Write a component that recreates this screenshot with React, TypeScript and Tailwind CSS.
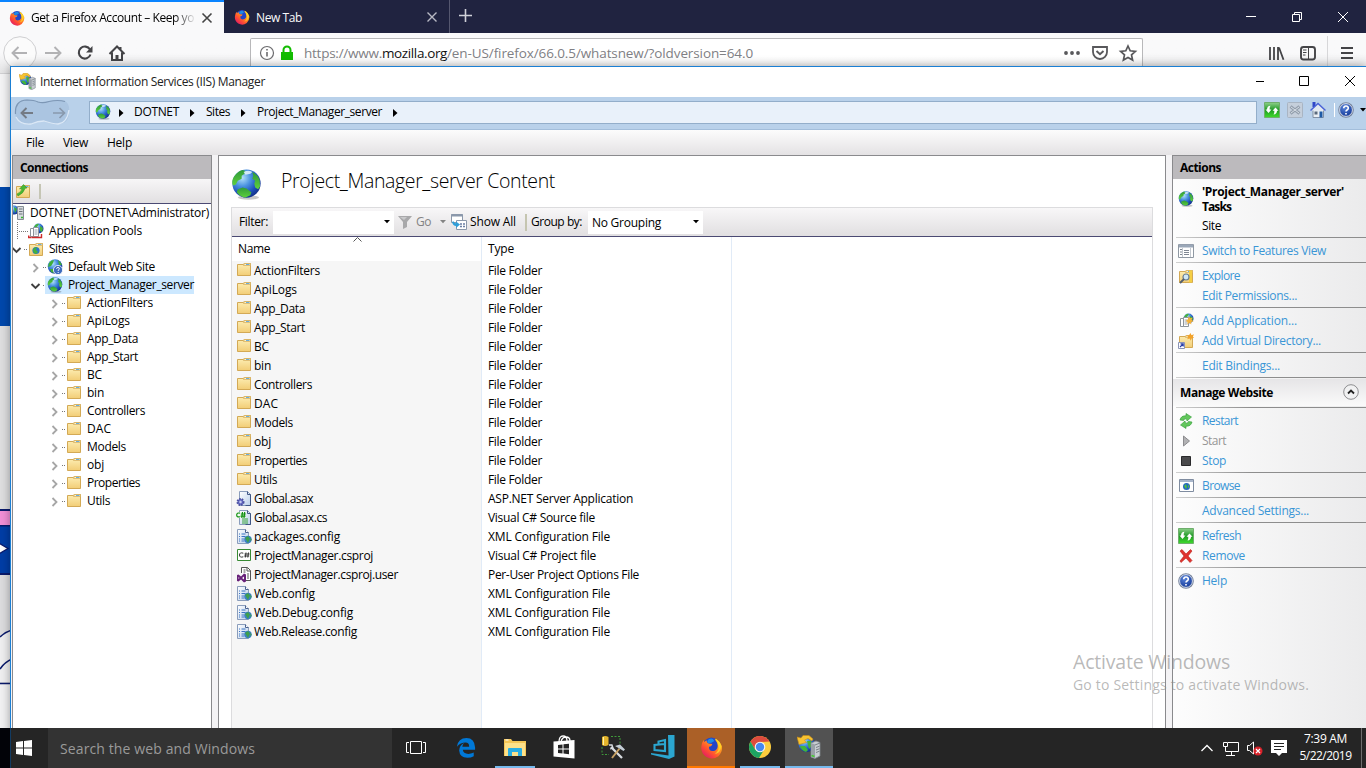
import { useLayoutEffect, useRef, useState } from "react";
import type { ReactNode } from "react";

/* Label whose tracking is adjusted so that it fills a given width. */
function T({ w, children, className = "" }: { w: number; children: string; className?: string }) {
  const ref = useRef<HTMLSpanElement>(null);
  const [spacing, setSpacing] = useState(0);
  useLayoutEffect(() => {
    const el = ref.current;
    if (!el) return;
    el.style.letterSpacing = "0px";
    const natural = el.getBoundingClientRect().width;
    const next = (w - natural) / children.length;
    el.style.letterSpacing = next + "px";
    setSpacing(next);
  }, [w, children]);
  return (
    <span ref={ref} className={"inline-block shrink-0 whitespace-pre " + className} style={{ letterSpacing: spacing + "px" }}>
      {children}
    </span>
  );
}

function Defs() {
  return (
    <svg className="absolute h-0 w-0" aria-hidden="true">
      <defs>
        <radialGradient id="ocean" cx="0.35" cy="0.3" r="0.75">
          <stop offset="0" stopColor="#b4e2fa" />
          <stop offset="0.4" stopColor="#4a92e0" />
          <stop offset="0.75" stopColor="#1d4fb8" />
          <stop offset="1" stopColor="#123088" />
        </radialGradient>
        <linearGradient id="land" x1="0" y1="0" x2="0" y2="1">
          <stop offset="0" stopColor="#2f9a3a" />
          <stop offset="1" stopColor="#5ed03c" />
        </linearGradient>
        <linearGradient id="folderG" x1="0" y1="0" x2="0" y2="1">
          <stop offset="0" stopColor="#fdeeb4" />
          <stop offset="1" stopColor="#f2cd76" />
        </linearGradient>
        <linearGradient id="fox" x1="1" y1="0" x2="0.2" y2="1">
          <stop offset="0" stopColor="#ffe226" />
          <stop offset="0.4" stopColor="#ff9a1f" />
          <stop offset="0.7" stopColor="#ff5130" />
          <stop offset="1" stopColor="#e0166a" />
        </linearGradient>
        <linearGradient id="greenG" x1="0" y1="0" x2="0" y2="1">
          <stop offset="0" stopColor="#8ed08a" />
          <stop offset="0.5" stopColor="#1f9a26" />
          <stop offset="1" stopColor="#3fdc2c" />
        </linearGradient>
        <linearGradient id="pageG" x1="0" y1="0" x2="1" y2="1">
          <stop offset="0" stopColor="#ffffff" />
          <stop offset="1" stopColor="#b9cfea" />
        </linearGradient>
        <radialGradient id="helpG" cx="0.4" cy="0.3" r="0.8">
          <stop offset="0" stopColor="#5b86dc" />
          <stop offset="1" stopColor="#0b2f8e" />
        </radialGradient>
      </defs>
    </svg>
  );
}

function Globe({ s = 16 }: { s?: number }) {
  return (
    <svg width={s} height={s} viewBox="0 0 32 32" className="shrink-0">
      <ellipse cx="18" cy="29.500" rx="11" ry="2.200" fill="#000" opacity="0.22" />
      <circle cx="16" cy="15" r="14.600" fill="url(#ocean)" />
      <path d="M3 8Q7 2 12 1l3 1-1 3-3 2 0 3-4 2-2 4-3 1Q0 13 3 8Z" fill="url(#land)" />
      <path d="M22 3q5 2 7.500 8l.500 7-2 3-3-2-1-4 1-3-3-2 1-3Z" fill="url(#land)" />
      <path d="M7 21l5-2 4 1 5 4-1 3-5 2.500Q9 28.500 6 24Z" fill="url(#land)" />
      <path d="M13 3q5-2.500 9 0l-2 2-5 1Z" fill="#e6f6fb" opacity="0.85" />
    </svg>
  );
}

function Folder({ kind = "" }: { kind?: string }) {
  return (
    <svg width="16" height="16" viewBox="0 0 16 16" className="shrink-0">
      <path d="M1.500 3.500V14.500H14.500V2.500H8.500L7 3.500Z" fill="url(#folderG)" stroke="#d3a955" />
      <path d="M7.500 4.500 8.500 2.500h6v2Z" fill="#fff6d0" stroke="#d3a955" strokeWidth="0.700" />
      <path d="M10 3.500h3.500" stroke="#6aaedd" />
      {kind === "globe" && (
        <g>
          <circle cx="8" cy="9.500" r="3.600" fill="#2c78cc" />
          <path d="M5 9q1-3 4-3l-1 3 2 2-2 2q-3-1-3-4Z" fill="#46b13b" />
        </g>
      )}
      {kind === "up" && <path d="M2 11Q6.500 9 7 5.500L4.500 6 8.500 1.500 12 5l-2 .300Q9 10 3 13Z" fill="#49b832" stroke="#2b8a1d" strokeWidth="0.500" />}
      {kind === "search" && (
        <g>
          <path d="M11 2.500h3v12h-3z" fill="#f5cf45" />
          <circle cx="8" cy="9" r="3" fill="#cfe7f7" stroke="#6a7f94" strokeWidth="1.200" />
          <path d="M6 11l-4 4" stroke="#555f6b" strokeWidth="2" />
        </g>
      )}
      {kind === "link" && (
        <g>
          <path d="M12.500 0l1 2.300 2.400-1-1 2.400 1.100 1-2.400.700-.8 2.300-1.200-2.200-2.400.700 1-2.300-1.700-1.400 2.500-.3Z" fill="#f2a22a" />
          <path d="M.500 9.500h6v6h-6z" fill="#fff" stroke="#8b93b5" />
          <path d="M2 14l3-3M2.500 10.800h2.700v2.700" stroke="#2a3ea8" fill="none" strokeWidth="1.200" />
        </g>
      )}
    </svg>
  );
}

function IisIcon({ s = 16 }: { s?: number }) {
  return (
    <svg width={s} height={s} viewBox="0 0 24 24" className="shrink-0">
      <circle cx="9.500" cy="9" r="8" fill="url(#ocean)" />
      <path d="M3 11l5 0 3 4-2 2q-5-2-6-6Z" fill="#42b43a" />
      <path d="M10 6l4 0 1 5-3 3-1-4Z" fill="#42b43a" />
      <path d="M0 2 4 3 6 .500 12 .500 16 4 15 6 11 3.500 7.500 5 9.500 7.500 2 9.500Z" fill="#f7c331" stroke="#c98a12" strokeWidth="0.600" />
      <path d="M14 8l5-2 4 1.500v13.500l-5 2.500-4-1.500Z" fill="#c7ccd1" stroke="#7d858c" strokeWidth="0.800" />
      <path d="M14 8l4 1.500v14l-4-1.500Z" fill="#9aa1a8" />
      <path d="M18 10l5-2M19 12.500l3.500-1.300M19 15l3.500-1.300M19 17.500l3.500-1.300" stroke="#6f777e" strokeWidth="0.900" />
      <path d="M14.500 20.500l3 1" stroke="#43cf2f" strokeWidth="1.600" />
    </svg>
  );
}

function Firefox({ s }: { s: number }) {
  return (
    <svg width={s} height={s} viewBox="0 0 32 32" className="shrink-0">
      <circle cx="16" cy="14" r="12" fill="#2345c8" />
      <path d="M16 1.500q3 1 4.500 3.500l2-1q6 4 8 10 1 9-5 14-8 6-17 1-8-6-6.500-15Q2.500 9 5 5.500l1 3L9 6q0 3 3 4.500l5 .500q0 3-4.500 4-.5 5 4.500 6 5 0 7-4 2-6-2.500-11Q19.500 3 16 1.500Z" fill="url(#fox)" />
      <path d="M21 3.500q8 4 8.500 11-1 9-9 11 7-6 5-12-1-6-4.500-10Z" fill="#ffdc2a" opacity="0.750" />
      <path d="M10 7q3-4.500 8-3l2 3-4 2.500-5 .500Z" fill="#1d8ce8" />
    </svg>
  );
}

function ServerIcon() {
  return (
    <svg width="12" height="16" viewBox="0 0 12 16" className="shrink-0">
      <circle cx="1" cy="5" r="4.500" fill="url(#ocean)" />
      <path d="M1 2l3 2-2 4Z" fill="#3fae36" />
      <path d="M4.500 1.500h6v13h-6z" fill="#d7dbdf" stroke="#858d95" />
      <path d="M6 4h3.500M6 6.500h3.500M6 9h3.500" stroke="#6c747b" />
      <path d="M8 12.500h2" stroke="#35b82d" strokeWidth="1.500" />
    </svg>
  );
}

function PoolsIcon({ star = false }: { star?: boolean }) {
  return (
    <svg width="16" height="16" viewBox="0 0 16 16" className="shrink-0">
      <circle cx="10.500" cy="5.500" r="5" fill="url(#ocean)" />
      <path d="M6 4q2-4 5-3l-2 3-2 2ZM12 3l3 2-1 4-2-1Z" fill="#46b13b" />
      <path d="M2.500 5.500h5v8h-5z" fill="#fff" stroke="#8d949b" />
      <path d="M5.500 4.500h5v9h-5z" fill="#fff" stroke="#8d949b" />
      <path d="M6.500 7h3M6.500 9h3M6.500 11h3" stroke="#9aa4ae" />
      {star ? (
        <path d="M11 3l1 2.300 2.600-.8-1 2.300 2 1.500-2.500.600.2 2.600-2-1.700-2 1.700.300-2.600-2-1 2.200-1.400Z" fill="#f5b23a" />
      ) : (
        <path d="M.700 12.500v2h3M13.500 11v3.500h-2M4 14.500h8" fill="none" stroke="#d02a2a" strokeWidth="1.400" />
      )}
    </svg>
  );
}

function HelpIcon({ s = 16 }: { s?: number }) {
  return (
    <svg width={s} height={s} viewBox="0 0 16 16" className="shrink-0">
      <circle cx="8" cy="8" r="7.800" fill="#76839c" />
      <circle cx="8" cy="8" r="6.400" fill="url(#helpG)" stroke="#dfe5f1" strokeWidth="0.900" />
      <path d="M5.700 6.200Q5.900 4 8 4t2.300 2Q10.300 7.200 9 8 8 8.600 8 9.600M8 11v1.500" fill="none" stroke="#fff" strokeWidth="1.600" />
    </svg>
  );
}

function DefaultSiteIcon() {
  return (
    <svg width="16" height="16" viewBox="0 0 16 16" className="shrink-0">
      <circle cx="8" cy="7.500" r="7.300" fill="url(#ocean)" />
      <path d="M2 4q2-3 5-3L6 4 4 7 1 8ZM11 1q3 2 4 5l-3 0ZM3 10l3 0 1 4-3-1Z" fill="#3fae36" />
      <circle cx="11" cy="11" r="4.600" fill="#3e6bbd" stroke="#fff" strokeWidth="0.800" />
      <path d="M9.500 9.700Q9.700 8.500 11 8.500t1.400 1.200Q12.400 10.500 11.200 11.200V12M11.200 13v1" fill="none" stroke="#fff" />
    </svg>
  );
}

function RefreshIcon() {
  return (
    <svg width="16" height="16" viewBox="0 0 16 16" className="shrink-0">
      <path d="M.500.500h15v15H.500z" fill="url(#greenG)" stroke="#6fae6c" />
      <path d="M4.500 11 1.500 7.500H3Q3 4 6.500 3.700 5.500 5 5.700 7.500H7.500ZM11.500 5.500l3 3.200h-1.500Q13 12 9.500 12.500 10.500 11 10.300 8.700H8.500Z" fill="#fff" />
    </svg>
  );
}

function FileIcon({ kind }: { kind: string }) {
  if (kind === "csproj")
    return (
      <svg width="16" height="16" viewBox="0 0 16 16" className="shrink-0">
        <path d="M1.500 1.500h13v11h-13z" fill="#fff" stroke="#388a34" />
        <path d="M7.300 5.200Q3.500 4 3.500 7T7.300 8.800M10 4.500l-.7 5M12.500 4.500l-.7 5M8.500 6h5M8.200 8h5" fill="none" stroke="#333" />
      </svg>
    );
  if (kind === "user")
    return (
      <svg width="16" height="16" viewBox="0 0 16 16" className="shrink-0">
        <path d="M5.500 6V.500h6l3 3v10H9" fill="#fff" stroke="#555" />
        <path d="M11 .500v3.500h3.500M7.500 3h2M7.500 5h2M11 7h2M11 9h2M11 11h2" fill="none" stroke="#555" />
        <path d="M1 8l1.500-.5L5 9.500 8 6.500 10 7.500v7l-2 1-3-3-2.500 2L1 14Zm1.500 2v2l1-1ZM8 9.500 6 11l2 1.500Z" fill="#68217a" fillRule="evenodd" />
      </svg>
    );
  return (
    <svg width="16" height="16" viewBox="0 0 16 16" className="shrink-0">
      {kind !== "config" && (
        <g>
          <path d="M3.500.500h8l3 3v11h-11z" fill="url(#pageG)" stroke="#8a9dbc" />
          <path d="M11.500.500v3h3M14.500 3.500v11h-5" fill="none" stroke="#3f5685" />
        </g>
      )}
      {kind === "config" && (
        <g>
          <path d="M1.500.500h8l3 3v11h-11z" fill="url(#pageG)" stroke="#8a9dbc" />
          <path d="M9.500.500v3h3" fill="#fff" stroke="#4a628f" />
          <path d="M3 5h1M3 7.500h1M3 10h1M3 12h1M5.500 5h4M5.500 7.500h4M5.500 10h3M5.500 12h3" stroke="#3b74c4" />
          <circle cx="12" cy="10.500" r="3.700" fill="#3a7fc4" />
          <path d="M9 9l3-2 2 2.500L12 14ZM14 8.500l1.700 2-1 2Z" fill="#3d9f4d" />
        </g>
      )}
      {kind === "asax" && (
        <g>
          <circle cx="4.500" cy="11" r="3" fill="#6a70c8" stroke="#4b50a0" strokeWidth="2" strokeDasharray="1.500 1" />
          <circle cx="4.500" cy="11" r="1.200" fill="#c9ccf0" />
        </g>
      )}
      {kind === "cs" && (
        <g>
          <path d="M6 9h6M6 11h6M6 13h6" stroke="#3ba53b" />
          <path d="M0 2h9.500v6H0z" fill="#f4fbf4" />
          <path d="M4 3.200Q.700 2.300.700 5T4 6.700M6.500 2l-.7 6M8.700 2 8 8M4.800 4h5M4.500 6.200h5" fill="none" stroke="#109010" strokeWidth="1.200" />
        </g>
      )}
    </svg>
  );
}

function Chevron({ open }: { open: boolean }) {
  return (
    <svg width="12" height="12" viewBox="0 0 12 12" className="mt-[2px] shrink-0">
      {open ? (
        <path d="M1.500 4l4 4 4-4" fill="none" stroke="#404040" strokeWidth="1.900" />
      ) : (
        <path d="M3.500 2l4 4-4 4" fill="none" stroke="#a6a6a6" strokeWidth="1.800" />
      )}
    </svg>
  );
}

const folders: [string, number][] = [
  ["ActionFilters", 66],
  ["ApiLogs", 43],
  ["App_Data", 51],
  ["App_Start", 51],
  ["BC", 15],
  ["bin", 17],
  ["Controllers", 58],
  ["DAC", 24],
  ["Models", 39],
  ["obj", 17],
  ["Properties", 53],
  ["Utils", 23],
];

const files: [string, number, string, string, number][] = [
  ["Global.asax", 59, "asax", "ASP.NET Server Application", 145],
  ["Global.asax.cs", 73, "cs", "Visual C# Source file", 107],
  ["packages.config", 86, "config", "XML Configuration File", 122],
  ["ProjectManager.csproj", 119, "csproj", "Visual C# Project file", 108],
  ["ProjectManager.csproj.user", 144, "user", "Per-User Project Options File", 151],
  ["Web.config", 61, "config", "XML Configuration File", 122],
  ["Web.Debug.config", 99, "config", "XML Configuration File", 122],
  ["Web.Release.config", 103, "config", "XML Configuration File", 122],
];

function FirefoxWindow() {
  return (
    <div className="flex h-full flex-col bg-[#fafafa]">
      <div className="flex h-[33px] bg-[#202340]">
        <div className="flex w-[224px] items-center border-t-2 border-[#0a84ff] bg-[#f9f9fa] pl-[9px]">
          <Firefox s={16} />
          <div className="ml-[6px] flex w-[166px] pt-px">
            <T w={163} className="bg-gradient-to-r from-black from-88% to-black/10 bg-clip-text leading-[18px] text-transparent">Get a Firefox Account – Keep yo</T>
          </div>
          <svg width="12" height="12" viewBox="0 0 12 12" className="ml-[4px]"><path d="M1.500 1.500l9 9M10.500 1.500l-9 9" stroke="#444" strokeWidth="1.600" /></svg>
        </div>
        <div className="flex w-[226px] items-center border-r border-[#55576f] pl-[10px] pt-px text-[#f9f9fa]">
          <Firefox s={16} />
          <T w={46} className="ml-[6px] mt-[2px]">New Tab</T>
          <svg width="12" height="12" viewBox="0 0 12 12" className="ml-[124px]"><path d="M1.500 1.500l9 9M10.500 1.500l-9 9" stroke="#b8b9c4" strokeWidth="1.400" /></svg>
        </div>
        <svg width="15" height="15" viewBox="0 0 15 15" className="ml-[8px] mt-[8px]"><path d="M7.500 1v13M1 7.500h13" stroke="#d0d1d9" strokeWidth="1.600" /></svg>
        <div className="ml-auto flex items-center gap-[34px] pr-[17px]">
          <svg width="12" height="12"><path d="M1 5.500h10" stroke="#fff" /></svg>
          <svg width="12" height="12" fill="none" stroke="#fff"><path d="M1.500 3.500h7v7h-7zM3.500 3V1.500h7v7H9" /></svg>
          <svg width="12" height="12"><path d="M1 1l10 10M11 1 1 11" stroke="#fff" /></svg>
        </div>
      </div>
      <div className="flex h-[41px] shrink-0 border-b border-[#d0d0d2] bg-gradient-to-b from-[#f9f9fa] from-50% to-[#e4e4e5]">
        <svg width="140" height="40" viewBox="0 33 140 40" fill="none" className="shrink-0">
          <circle cx="20" cy="53" r="16.300" fill="#fbfbfb" stroke="#cfcfd1" />
          <path d="M27 53H13M18.500 47 12.500 53l6 6" stroke="#b2b2b4" strokeWidth="1.900" />
          <path d="M45 53h14M54.500 47l6 6-6 6" stroke="#b2b2b4" strokeWidth="1.900" />
          <path d="M90 49.500a6 6 0 1 0 .500 5" stroke="#444447" strokeWidth="2.100" />
          <path d="M92.500 46v6.500H86Z" fill="#444447" />
          <path d="M109.500 54 117 46.500l7.500 7.500M112 52.500V60h10v-7.500M120.500 47v3" stroke="#444447" strokeWidth="2" />
          <path d="M115.500 55h3v4h-3z" fill="#444447" />
        </svg>
        <div className="ml-[110px] mt-[5px] flex h-[35px] w-[893px] rounded-t-[2px] border border-b-0 border-[#b8b8ba] bg-gradient-to-b from-white from-50% to-[#f0f0f0] text-[13.500px] text-[#808084]">
          <svg width="50" height="30" viewBox="251 39 50 30" fill="none" className="shrink-0">
            <circle cx="267" cy="53" r="6.500" stroke="#6b6b6e" strokeWidth="1.200" />
            <path d="M267 52v4.500M267 49v1.600" stroke="#6b6b6e" strokeWidth="1.600" />
            <path d="M281 52h12v8h-12z" fill="#12bc00" />
            <path d="M283.500 53v-3a3.500 3.500 0 0 1 7 0v3" stroke="#12bc00" strokeWidth="2" />
          </svg>
          <div className="ml-[3px] flex h-[30px] items-center">
            <T w={78}>https://www.</T>
            <T w={65} className="text-[#111]">mozilla.org</T>
            <T w={306}>/en-US/firefox/66.0.5/whatsnew/?oldversion=64.0</T>
          </div>
          <svg width="90" height="30" viewBox="1055 39 90 30" fill="none" className="ml-auto mr-[-3px] shrink-0">
            <path d="M1066 53h.010M1072 53h.010M1078 53h.010" stroke="#58585b" strokeWidth="3.800" strokeLinecap="round" />
            <path d="M1093 47h14v5a7 7 0 0 1-14 0Z" stroke="#58585b" strokeWidth="1.800" />
            <path d="M1096.500 51l3.500 3.300 3.500-3.300" stroke="#58585b" strokeWidth="1.900" />
            <path d="M1128 46l2.200 4.800 5.200.600-3.900 3.500 1.100 5.200-4.600-2.600-4.600 2.600 1.100-5.200-3.900-3.500 5.200-.6Z" stroke="#58585b" strokeWidth="1.700" />
          </svg>
        </div>
        <svg width="110" height="40" viewBox="1256 33 110 40" fill="none" className="ml-auto shrink-0">
          <path d="M1270 47v13M1274 47v13M1278 47v13M1279 47.500l4.500 12.300" stroke="#444447" strokeWidth="1.800" />
          <rect x="1301" y="47" width="14" height="12.500" rx="2.500" stroke="#444447" strokeWidth="1.900" />
          <path d="M1308.500 47v12M1303 50h3.500M1303 52.500h3.500M1303 55h2.500" stroke="#444447" />
          <path d="M1327.500 36v37" stroke="#d7d7d9" />
          <path d="M1341 48h12M1341 53h12M1341 58h12" stroke="#444447" strokeWidth="2" />
        </svg>
      </div>
      <svg width="12" height="694" viewBox="0 74 12 694" className="shrink-0">
        <path d="M0 74h12v113H0z" fill="#f4f4f5" />
        <path d="M0 187h12v139H0z" fill="#0048ac" />
        <path d="M0 326h12v183H0z" fill="#dededf" />
        <path d="M0 509h12v66H0z" fill="#0a1a6c" />
        <path d="M0 511h12v14H0z" fill="#f28fd6" />
        <path d="M0 526.500h12v46.500H0z" fill="#003da5" />
        <path d="M-2 542.500l10 6-10 6Z" fill="#fff" stroke="#0a1a6c" strokeWidth="1.300" />
        <path d="M0 575h12v193H0z" fill="#dcdcde" />
        <path d="M0 637Q5 632 12 630V682H0Z" fill="#efeff0" />
        <path d="M0 684h12v84H0z" fill="#f1f1f2" />
        <path d="M0 637Q5 632 12 630M0 669Q5 662 12 659M0 683.500h12" fill="none" stroke="#0a1a6c" strokeWidth="1.600" />
      </svg>
    </div>
  );
}

function TitleBar() {
  return (
    <div className="flex h-[30px] shrink-0 items-center bg-white pl-[8px] text-[#222]">
      <div className="-mt-[2px]"><IisIcon s={17} /></div>
      <T w={225} className="ml-[4px]">Internet Information Services (IIS) Manager</T>
      <svg width="110" height="30" viewBox="1256 67 110 30" fill="none" stroke="#000" className="ml-auto">
        <path d="M1254 81.500h10M1299.500 76.500h9v9h-9zM1345 76l10 10M1355 76l-10 10" />
      </svg>
    </div>
  );
}

function Crumb({ w, gap, children }: { w: number; gap: string; children: string }) {
  return (
    <>
      <T w={w} className={"-mt-px " + gap}>{children}</T>
      <svg width="5" height="8" className="ml-[11px]"><path d="M0 0l4.500 4L0 8Z" fill="#000" /></svg>
    </>
  );
}

function NavBar() {
  return (
    <div className="flex h-[33px] shrink-0 items-start border-b border-[#a3bedb] bg-[#b9d1ea] pt-[4px]">
      <svg width="58" height="28" viewBox="14 99 58 28" fill="none" className="ml-[3px] mt-[-2px]">
        <path d="M15 112Q15 100 27 99.500 34 99.500 38 101.500 43 103 49 101 58 98.500 65 101 70 104 69 112 69 124 58 124 50 124 46 122 42 121 36 123 16 128 15 112Z" fill="#abc5e1" />
        <path d="M15.500 114Q14.500 100.500 27 100 34 100 38 102 43 103.500 49 101.500 58 99.500 65 101.500" stroke="#7d97b5" strokeWidth="1.200" />
        <path d="M16 117Q20 125 31 124 38 121 44 121 53 124 58 124 67 123 69 110" stroke="#dbe8f6" strokeWidth="1.300" />
        <path d="M33 113H22M26.500 108l-5 5 5 5" stroke="#747b85" strokeWidth="1.900" />
        <path d="M53 113h11M59.500 108l5 5-5 5" stroke="#8999ad" strokeWidth="1.700" />
      </svg>
      <div className="ml-[17px] flex h-[23px] w-[1168px] items-center border border-[#93aeca] bg-[#e9f1fa]">
        <div className="-mt-px ml-[5px]"><Globe s={16} /></div>
        <svg width="5" height="8" className="ml-[8px]"><path d="M0 0l4.500 4L0 8Z" fill="#000" /></svg>
        <Crumb w={45} gap="ml-[10px]">DOTNET</Crumb>
        <Crumb w={24} gap="ml-[11px]">Sites</Crumb>
        <Crumb w={125} gap="ml-[11px]">Project_Manager_server</Crumb>
      </div>
      <div className="ml-[7px] mt-px flex items-center">
        <RefreshIcon />
        <svg width="16" height="16" viewBox="0 0 16 16" className="ml-[7px]">
          <rect x="0.500" y="0.500" width="15" height="15" rx="1" fill="#c5cfdb" stroke="#a9b5c3" />
          <path d="M3.500 4.500l9 7M12.500 4.500l-9 7" stroke="#929eac" strokeWidth="3" />
          <path d="M4 5l8 6M12 5l-8 6" stroke="#d7dee6" />
        </svg>
        <svg width="16" height="16" viewBox="0 0 16 16" className="ml-[7px]">
          <path d="M3 7.500h10.500v8H3z" fill="#e9eef3" stroke="#8291a5" />
          <path d="M2.500 0h3v5h-3z" fill="#2f46c8" />
          <path d="M.500 8.500 8 1.500l7.500 7" fill="#e3e9f0" stroke="#4a62d6" strokeWidth="1.500" />
          <path d="M9.500 9.500h3v6h-3z" fill="#1d5aa6" /><path d="M4.500 9.500h3v3h-3z" fill="#5b6a7c" />
        </svg>
        <div className="ml-[8px] h-[14px] w-px bg-white" />
        <div className="ml-[3px]"><HelpIcon /></div>
        <svg width="6" height="4" className="ml-[6px] shrink-0"><path d="M0 0h6L3 3.500Z" fill="#000" /></svg>
      </div>
    </div>
  );
}

function TreeRow({ indent, w, icon, label, open, selected = false }: { indent: string; w: number; icon: ReactNode; label: string; open?: boolean; selected?: boolean }) {
  return (
    <div className={"flex h-[18px] items-center " + indent}>
      {open === undefined ? (
        <svg width="17" height="18" viewBox="0 0 17 18" className="shrink-0"><path d="M6.500 0v18M8 9.500h9" stroke="#777" strokeDasharray="1 1" /></svg>
      ) : (
        <>
          <Chevron open={open} />
          <svg width="5" height="18" viewBox="0 0 5 18" className="shrink-0"><path d="M1 9.500h4" stroke="#777" strokeDasharray="1 1" /></svg>
        </>
      )}
      <div className={"flex h-[18px] items-center " + (selected ? "-ml-0.5 bg-[#cce8ff] pl-0.5" : "")}>
        {icon}
        <T w={w} className="ml-[5px]">{label}</T>
      </div>
    </div>
  );
}

function Connections() {
  return (
    <div className="ml-px flex w-[200px] shrink-0 flex-col overflow-hidden border border-b-0 border-[#8a8a8d] bg-white">
      <div className="flex h-[23px] shrink-0 items-center bg-[#bcbabd] pl-[7px] font-bold"><T w={68}>Connections</T></div>
      <div className="flex h-[25px] shrink-0 items-center border-b border-[#4b4a73] bg-gradient-to-b from-[#f7f6f7] to-[#e2e0e2] pl-[2px]">
        <Folder kind="up" />
        <div className="ml-[8px] h-[15px] w-[2px] bg-[#c5c5b4]" />
      </div>
      <div className="flex flex-col">
        <div className="flex h-[18px] items-center">
          <ServerIcon />
          <T w={179} className="ml-[5px]">DOTNET (DOTNET\Administrator)</T>
        </div>
        <TreeRow indent="-ml-0.5" w={93} icon={<PoolsIcon />} label="Application Pools" />
        <TreeRow indent="-ml-0.5" w={24} icon={<Folder kind="globe" />} label="Sites" open />
        <TreeRow indent="pl-[17px]" w={87} icon={<DefaultSiteIcon />} label="Default Web Site" open={false} />
        <TreeRow indent="pl-[17px]" w={126} icon={<Globe s={16} />} label="Project_Manager_server" open selected />
        {folders.map(([name, w]) => (
          <TreeRow key={name} indent="pl-[36px]" w={w} icon={<div className="-mt-[2px]"><Folder /></div>} label={name} open={false} />
        ))}
      </div>
    </div>
  );
}

function DropArrow({ color = "#000" }: { color?: string }) {
  return <svg width="6" height="4" className="shrink-0"><path d="M0 0h6L3 3.300Z" fill={color} /></svg>;
}

function FilterBar() {
  return (
    <div className="flex h-[29px] shrink-0 items-center border-b border-[#4b4a73] bg-gradient-to-b from-[#f8f7f8] to-[#e1dfe1] pl-[7px]">
      <T w={29}>Filter:</T>
      <div className="ml-[5px] flex h-[23px] w-[121px] items-center justify-end bg-white pr-[4px]"><DropArrow /></div>
      <svg width="14" height="14" viewBox="0 0 14 14" className="ml-[4px]"><path d="M0 1h14l-5 6v5l-4 2V7Z" fill="#a8a8aa" /><path d="M2 2h7L6 5Z" fill="#c9c9cb" /></svg>
      <T w={15} className="ml-[4px] text-[#838383]">Go</T>
      <div className="ml-[9px] mr-[5px]"><DropArrow color="#838383" /></div>
      <svg width="16" height="16" viewBox="0 0 16 16">
        <path d="M.500.500h11v8H.500z" fill="#fff" stroke="#8b98ab" /><path d="M0 1.500h12" stroke="#8b98ab" strokeWidth="2" />
        <path d="M5.500 6.500h10v9h-10z" fill="#fff" stroke="#8b98ab" /><path d="M9 10h5M9 12.500h5" stroke="#6a7ea4" strokeDasharray="2 1" strokeWidth="1.500" />
        <path d="M1 8q1 4 4 4v2l4-3.500L5 7.500v1.800q-2 0-2.500-2Z" fill="#2f9ed8" />
      </svg>
      <T w={46} className="ml-[3px]">Show All</T>
      <div className="ml-[9px] h-[17px] w-[2px] bg-[#c5c5b0]" />
      <T w={51} className="ml-[4px]">Group by:</T>
      <div className="ml-[6px] flex h-[23px] w-[115px] items-center justify-between bg-white pl-[4px] pr-[4px]">
        <T w={69} className="mt-px">No Grouping</T>
        <DropArrow />
      </div>
    </div>
  );
}

function Content() {
  return (
    <div className="ml-[6px] flex w-[948px] shrink-0 flex-col border border-b-0 border-[#8a8a8d] bg-white">
      <div className="flex h-[51px] shrink-0 items-center pl-[12px] pt-[6px]">
        <Globe s={31} />
        <T w={274} className="-mt-[7px] ml-[19px] text-[19.500px] font-light">Project_Manager_server Content</T>
      </div>
      <div className="ml-[12px] flex w-[922px] flex-1 flex-col border border-b-0 border-[#dcdcde]">
        <FilterBar />
        <div className="flex flex-1">
          <div className="flex w-[250px] flex-col border-r border-[#e1ebf7] bg-[#f6f6f6]">
            <div className="flex h-[24px] items-center bg-white pl-[6px]">
              <T w={32}>Name</T>
              <svg width="9" height="5" className="-mt-[19px] ml-[83px]"><path d="M.500 4.500l4-4 4 4" fill="none" stroke="#555" /></svg>
            </div>
            {folders.map(([name, w]) => (
              <div key={name} className="flex h-[19px] items-center pl-[4px]"><div className="-mt-[3px]"><Folder /></div><T w={w} className="ml-[2px]">{name}</T></div>
            ))}
            {files.map(([name, w, kind]) => (
              <div key={name} className="flex h-[19px] items-center pl-[4px]"><FileIcon kind={kind} /><T w={w} className="ml-[2px]">{name}</T></div>
            ))}
          </div>
          <div className="flex w-[250px] flex-col border-r border-[#e1ebf7] pl-[6px]">
            <div className="flex h-[24px] items-center"><T w={26}>Type</T></div>
            {folders.map(([name]) => (
              <div key={name} className="flex h-[19px] items-center"><T w={54}>File Folder</T></div>
            ))}
            {files.map(([name, , , type, w]) => (
              <div key={name} className="flex h-[19px] items-center"><T w={w}>{type}</T></div>
            ))}
          </div>
        </div>
      </div>
    </div>
  );
}

function Action({ icon, w, children, muted = false }: { icon?: ReactNode; w: number; children: string; muted?: boolean }) {
  return (
    <div className="flex h-[20px] items-center pl-[5px]">
      <div className="-mt-px flex w-[16px] justify-center">{icon}</div>
      <T w={w} className={"ml-[8px] " + (muted ? "text-[#969696]" : "text-[#3a96d6]")}>{children}</T>
    </div>
  );
}

function Group({ children }: { children: ReactNode }) {
  return (
    <div className="shrink-0 pb-px">
      <div className="ml-[3px] h-px bg-gradient-to-r from-[#d0d0d0] to-[#8d8d8d] to-40%" />
      <div className="pt-[3px]">{children}</div>
    </div>
  );
}

function Actions() {
  return (
    <div className="ml-[6px] flex flex-1 flex-col border-l border-t border-[#8a8a8d] bg-gradient-to-r from-[#fdfdfd] to-[#ebebec]">
      <div className="flex h-[23px] shrink-0 items-center bg-[#bcbabd] pl-[7px] font-bold"><T w={41}>Actions</T></div>
      <div className="flex h-[58px] shrink-0 pl-[5px]">
        <div className="mt-[12px]"><Globe s={16} /></div>
        <div className="ml-[8px] flex flex-col items-start pt-[5px] leading-[15px]">
          <T w={142} className="font-bold">'Project_Manager_server'</T>
          <T w={29} className="font-bold">Tasks</T>
          <T w={19} className="mt-[4px]">Site</T>
        </div>
      </div>
      <Group>
        <Action w={124} icon={<svg width="16" height="16" viewBox="0 0 16 16"><path d="M.500 1.500h15v13H.500z" fill="#fff" stroke="#8f98a3" /><path d="M1 3h14" stroke="#9aa7b8" strokeWidth="3" /><path d="M2 6.500h2M2 9h2M2 11.500h2M6 7.500h5M6 9.500h5M6 11.500h5" stroke="#7f8792" /><path d="M4.500 5v9M12.500 5v9" stroke="#c3c8cf" /></svg>}>Switch to Features View</Action>
      </Group>
      <Group>
        <Action w={38} icon={<Folder kind="search" />}>Explore</Action>
        <Action w={95}>Edit Permissions...</Action>
      </Group>
      <Group>
        <Action w={95} icon={<PoolsIcon star />}>Add Application...</Action>
        <Action w={119} icon={<Folder kind="link" />}>Add Virtual Directory...</Action>
      </Group>
      <Group><Action w={78}>Edit Bindings...</Action></Group>
      <Group><div className="-mt-[2px] flex h-[27px] items-center justify-between bg-gradient-to-b from-[#e6e5e7] to-[#fafafa] pl-[7px] pr-[7px] font-bold">
        <T w={93}>Manage Website</T>
        <svg width="16" height="16" viewBox="0 0 16 16" className="-mt-[2px]"><circle cx="8" cy="8" r="7.300" fill="#f1f1f2" stroke="#8d8d90" /><path d="M5 9.500l3-3 3 3" fill="none" stroke="#222" strokeWidth="1.800" /></svg>
      </div></Group>
      <Group>
        <Action w={36} icon={<svg width="14" height="16" viewBox="0 0 14 16"><path d="M1 7Q2 2.500 7 2.800L7 .500 12.500 4 8 8 7.500 5.800Q5 5.500 4.500 7.500ZM13 9q-1 4.500-6 4.200L7 15.500 1.500 12 6 8l.500 2.200q2.500.300 3-1.700Z" fill="#63c75c" stroke="#2d9a34" strokeWidth="0.600" /></svg>}>Restart</Action>
        <Action w={24} muted icon={<svg width="9" height="12"><path d="M1.500 1l6 5-6 5Z" fill="#b2b2b4" stroke="#8c8c8f" /></svg>}>Start</Action>
        <Action w={24} icon={<svg width="10" height="10"><path d="M.500.500h9v9h-9z" fill="#4a4a4c" stroke="#2a2a2c" /></svg>}>Stop</Action>
      </Group>
      <Group>
        <Action w={38} icon={<svg width="15" height="14" viewBox="0 0 15 14"><path d="M.500.500h14v12H.500z" fill="#fff" stroke="#7f8ca0" /><path d="M1 2h13" stroke="#a9b7cc" strokeWidth="2" /><circle cx="7.500" cy="7.500" r="3.500" fill="#2469c0" /><path d="M5 7l2-2 1 3-1 2ZM9 5l1.500 3L9 9Z" fill="#4fbd43" /></svg>}>Browse</Action>
      </Group>
      <Group><Action w={107}>Advanced Settings...</Action></Group>
      <Group>
        <Action w={39} icon={<RefreshIcon />}>Refresh</Action>
        <Action w={43} icon={<svg width="14" height="14" viewBox="0 0 14 14"><path d="M1 2 3 .500 7 5l4.500-4.500L13 2 9 7l4 4.500-2 2L7 9l-5 4.500L1 12l4-5Z" fill="#e0342f" stroke="#b81c18" strokeWidth="0.600" /></svg>}>Remove</Action>
      </Group>
      <Group><Action w={25} icon={<HelpIcon />}>Help</Action></Group>
    </div>
  );
}

function IisWindow() {
  return (
    <div className="absolute left-[10px] top-[66px] flex h-[702px] w-[1356px] flex-col overflow-hidden border-l border-t border-[#1a7fd4] bg-[#f4f3f5] shadow-[0_0_9px_rgba(0,0,0,0.35)]">
      <TitleBar />
      <NavBar />
      <div className="flex h-[25px] shrink-0 items-center bg-gradient-to-b from-[#fcfcfc] to-[#e4e2e4] pl-[15px]">
        <T w={18}>File</T>
        <T w={25} className="ml-[19px]">View</T>
        <T w={25} className="ml-[19px]">Help</T>
      </div>
      <div className="flex min-h-0 flex-1">
        <Connections />
        <Content />
        <Actions />
      </div>
    </div>
  );
}

function TaskButton({ className, children }: { className: string; children: ReactNode }) {
  return <div className={"flex h-[40px] shrink-0 items-center justify-center border-b-2 " + className}>{children}</div>;
}

function Taskbar() {
  return (
    <div className="absolute bottom-0 left-0 flex h-[40px] w-full bg-[#252525] text-white">
      <div className="w-[10px] bg-[#020308]" />
      <div className="flex w-[38px] items-center border-l border-[#123b62] pl-[5px]">
        <svg width="16" height="16" viewBox="0 0 16 16"><path d="M0 2l7-1v6.500H0ZM8 .900 16 0v7.500H8ZM0 8.500h7V15l-7-1ZM8 8.500h8V16l-8-1Z" fill="#fff" /></svg>
      </div>
      <div className="flex w-[344px] items-center bg-[#333333] pl-[12px] pt-px text-[14px] text-[#9a9a9a]"><T w={195}>Search the web and Windows</T></div>
      <div className="flex w-[48px] items-center justify-center">
        <svg width="20" height="16" viewBox="0 0 20 16" fill="none" stroke="#fff"><path d="M4.500 1.500h11v12h-11zM3 2.500H.500v10H3M17 2.500h2.500v10H17" /></svg>
      </div>
      <TaskButton className="w-[52px] border-transparent">
        <svg width="20" height="22" viewBox="0 0 22 22" className="-ml-px mt-px"><path d="M1 9.500Q2.500 0 11.500 0 20.500 0 21 10.500V13H7.500q.500 4.500 6 4.500 3 0 6-1.600V20q-3 1.800-7 1.800-8.500-.3-9-8 .2-5.800 5.500-8.300-2 2-2 4H14.500Q14.500 5 10.500 5 5 5 1 9.500Z" fill="#0078d7" /></svg>
      </TaskButton>
      <TaskButton className="ml-[3px] w-[40px] border-[#76b9ed]">
        <svg width="22" height="20" viewBox="0 0 22 20" className="mt-px"><path d="M0 1h7l1.500 2H22v15H0Z" fill="#f4c657" /><path d="M1 5h20v13H1z" fill="#fde18a" /><path d="M4 18v-7q0-1 1-1h12q1 0 1 1v7h-4v-4H8v4Z" fill="#2aaee3" /><path d="M1.500 2h3" stroke="#fff" /></svg>
      </TaskButton>
      <TaskButton className="ml-[5px] w-[48px] border-transparent">
        <svg width="22" height="24" viewBox="0 0 22 24"><path d="M.500 6.500 21.500 5v18.500L.500 21.500Z" fill="#fff" /><path d="M6 7Q6 1 10 1t4 5M8 7q1-5 5-5t4 4" fill="none" stroke="#fff" strokeWidth="1.300" /><path d="M5 10l4.500-.5v4H5ZM10.500 9.300 16 8.700v4.800h-5.500ZM5 14.500h4.500v4L5 18ZM10.500 14.500H16v4.800l-5.500-.7Z" fill="#252525" /></svg>
      </TaskButton>
      <TaskButton className="ml-[1px] w-[48px] border-transparent">
        <svg width="24" height="24" viewBox="0 0 24 24" fill="none"><path d="M1 2q3-2 6.500 0v8Q4 12 1 10Z" fill="#e5b52c" /><path d="M2.500 2v8" stroke="#fff1a8" /><path d="M10 1.500h9v9M1 12v7.500h7" stroke="#3f9b3a" strokeDasharray="2 1.500" /><path d="M10 12l11 11" stroke="#d9dde1" strokeWidth="2.300" /><path d="M18.500 13.500 11 23" stroke="#c7a062" strokeWidth="2" /><path d="M14 11l5-1.500 5 5-1.500 1.500-4-2.500Z" fill="#c3ccd5" /><path d="M8 10l3 0 1 3-3 1" stroke="#d9dde1" strokeWidth="1.300" /></svg>
      </TaskButton>
      <TaskButton className="ml-[2px] w-[48px] border-transparent">
        <svg width="24" height="24" viewBox="0 0 24 24"><path d="M17 0h6.500v21.500L18 24 0 19.500v-1.500l17.500 2.500Z" fill="#2ba6d0" /><path d="M7.500 9V6.500L14 5v11L3.500 15v-5l10-1" stroke="#2ba6d0" strokeWidth="2.100" fill="none" /></svg>
      </TaskButton>
      <TaskButton className="ml-0 w-[48px] border-[#ff7800] bg-[#ab6027]"><Firefox s={23} /></TaskButton>
      <TaskButton className="ml-[5px] w-[40px] border-[#76b9ed]">
        <svg width="22" height="22" viewBox="0 0 22 22"><circle cx="11" cy="11" r="11" fill="#fccd3e" /><path d="M1.500 5.500A11 11 0 0 1 20.500 5.500L11 6 6.200 13.700Z" fill="#dd4b3e" /><path d="M1.500 5.500A11 11 0 0 0 10 22L15 13.700 11 16 6.200 13.700Z" fill="#1da462" /><circle cx="11" cy="11" r="5.300" fill="#f4f4f4" /><circle cx="11" cy="11" r="4.200" fill="#4688f1" /></svg>
      </TaskButton>
      <TaskButton className="ml-[5px] w-[48px] border-[#76b9ed] bg-[#525252]"><IisIcon s={24} /></TaskButton>
      <svg width="90" height="40" viewBox="1200 728 90 40" fill="none" stroke="#fff" className="ml-auto shrink-0">
        <path d="M1201.500 751l5.500-5.500 5.500 5.500" strokeWidth="1.300" />
        <path d="M1228 742.500h10.500v9h-11M1223.500 742.500h4v4h-4zM1225.500 746.500v5h3M1231.500 752v3M1226 755.500h9" />
        <path d="M1247.500 745.500h2l4-3.500v12l-4-3.500h-2z" />
        <circle cx="1258" cy="751" r="4.500" fill="#d9232b" stroke="none" /><path d="M1256 749l4 4M1260 749l-4 4" strokeWidth="1.200" />
        <path d="M1271 740h16v13h-5l-3 3-3-3h-5Z" fill="#fff" stroke="none" /><path d="M1274 743.500h10M1274 746.500h10M1274 749.500h7" stroke="#222" />
      </svg>
      <div className="flex w-[71px] shrink-0 flex-col items-center pt-[2px] leading-[17px]">
        <T w={43}>7:39 AM</T>
        <T w={52}>5/22/2019</T>
      </div>
      <div className="mr-[4px] w-px shrink-0 bg-[#6d6d6d]" />
    </div>
  );
}

export default function App() {
  return (
    <div className="relative h-[768px] w-[1366px] overflow-hidden font-['Open_Sans','Noto_Sans',sans-serif] text-[12px] leading-none text-black">
      <Defs />
      <FirefoxWindow />
      <IisWindow />
      <div className="pointer-events-none absolute left-[1073px] top-[652px] flex flex-col items-start text-[#8a8a8a]/60">
        <T w={157} className="text-[19.500px]">Activate Windows</T>
        <T w={236} className="mt-[6px] text-[14px]">Go to Settings to activate Windows.</T>
      </div>
      <Taskbar />
    </div>
  );
}
